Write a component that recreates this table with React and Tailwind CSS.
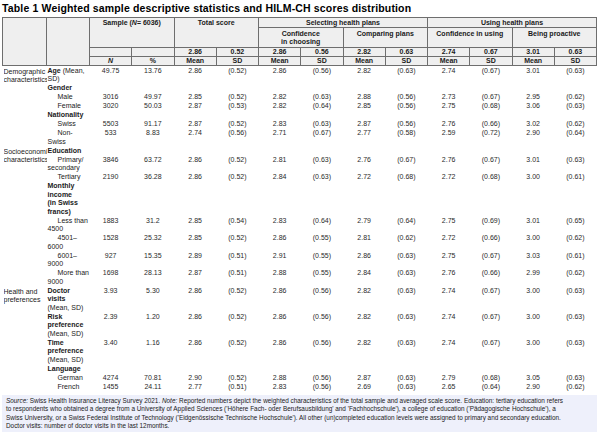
import React from 'react';

const rows = [
  { label: <><b>Age</b> (Mean,<br />SD)</>, v: ['49.75', '13.76', '2.86', '(0.52)', '2.86', '(0.56)', '2.82', '(0.63)', '2.74', '(0.67)', '3.01', '(0.63)'], cat: ['Demographic', 'characteristics'], span: 7 },
  { label: <b>Gender</b>, v: [] },
  { label: 'Male', indent: true, v: ['3016', '49.97', '2.85', '(0.52)', '2.82', '(0.63)', '2.88', '(0.56)', '2.73', '(0.67)', '2.95', '(0.62)'] },
  { label: 'Female', indent: true, v: ['3020', '50.03', '2.87', '(0.53)', '2.82', '(0.64)', '2.85', '(0.56)', '2.75', '(0.68)', '3.06', '(0.63)'] },
  { label: <b>Nationality</b>, v: [] },
  { label: 'Swiss', indent: true, v: ['5503', '91.17', '2.87', '(0.52)', '2.83', '(0.63)', '2.87', '(0.56)', '2.76', '(0.66)', '3.02', '(0.62)'] },
  { label: <>Non-<br />Swiss</>, indent: true, v: ['533', '8.83', '2.74', '(0.56)', '2.71', '(0.67)', '2.77', '(0.58)', '2.59', '(0.72)', '2.90', '(0.64)'] },
  { label: <b>Education</b>, v: [], cat: ['Socioeconomic', 'characteristics'], span: 8 },
  { label: <>Primary/<br />secondary</>, indent: true, v: ['3846', '63.72', '2.86', '(0.52)', '2.81', '(0.63)', '2.76', '(0.67)', '2.76', '(0.67)', '3.01', '(0.63)'] },
  { label: 'Tertiary', indent: true, v: ['2190', '36.28', '2.86', '(0.52)', '2.84', '(0.63)', '2.72', '(0.68)', '2.72', '(0.68)', '3.00', '(0.61)'] },
  { label: <b>Monthly<br />income<br />(in Swiss<br />francs)</b>, v: [] },
  { label: <>Less than<br />4500</>, indent: true, v: ['1883', '31.2', '2.85', '(0.54)', '2.83', '(0.64)', '2.79', '(0.64)', '2.75', '(0.69)', '3.01', '(0.65)'] },
  { label: <>4501–<br />6000</>, indent: true, v: ['1528', '25.32', '2.85', '(0.52)', '2.86', '(0.55)', '2.81', '(0.62)', '2.72', '(0.66)', '3.00', '(0.62)'] },
  { label: <>6001–<br />9000</>, indent: true, v: ['927', '15.35', '2.89', '(0.51)', '2.91', '(0.55)', '2.86', '(0.63)', '2.75', '(0.67)', '3.03', '(0.61)'] },
  { label: <>More than<br />9000</>, indent: true, v: ['1698', '28.13', '2.87', '(0.51)', '2.88', '(0.55)', '2.84', '(0.63)', '2.76', '(0.66)', '2.99', '(0.62)'] },
  { label: <><b>Doctor<br />visits</b><br />(Mean, SD)</>, v: ['3.93', '5.30', '2.86', '(0.52)', '2.86', '(0.56)', '2.82', '(0.63)', '2.74', '(0.67)', '3.00', '(0.63)'], cat: ['Health and', 'preferences'], span: 6 },
  { label: <><b>Risk<br />preference</b><br />(Mean, SD)</>, v: ['2.39', '1.20', '2.86', '(0.52)', '2.86', '(0.56)', '2.82', '(0.63)', '2.74', '(0.67)', '3.00', '(0.63)'] },
  { label: <><b>Time<br />preference</b><br />(Mean, SD)</>, v: ['3.40', '1.16', '2.86', '(0.52)', '2.86', '(0.56)', '2.82', '(0.63)', '2.74', '(0.67)', '3.00', '(0.63)'] },
  { label: <b>Language</b>, v: [] },
  { label: 'German', indent: true, v: ['4274', '70.81', '2.90', '(0.52)', '2.88', '(0.56)', '2.87', '(0.63)', '2.79', '(0.68)', '3.05', '(0.63)'] },
  { label: 'French', indent: true, v: ['1455', '24.11', '2.77', '(0.51)', '2.83', '(0.56)', '2.69', '(0.63)', '2.65', '(0.64)', '2.90', '(0.62)'] },
];

const th = 'border border-[#6e6e6e] bg-[#efefef] font-bold text-center align-top p-0 leading-[8px]';

export default function App() {
  return (
    <div className="w-[600px] h-[436px] bg-white text-[#1a1a1a] overflow-hidden" style={{ fontFamily: '"Liberation Sans", Arial, sans-serif' }}>
      <div className="pl-[2px] pt-[1px] h-[17px] text-[10.5px] leading-[14px] font-bold tracking-[0.15px] text-black">
        Table 1 Weighted sample descriptive statistics and HILM-CH scores distribution
      </div>
      <table className="ml-[2px] w-[595px] table-fixed border-collapse text-[7px] leading-[8.5px]">
        <colgroup>
          <col className="w-[44px]" />
          <col className="w-[43px]" />
          {Array.from({ length: 12 }).map((_, i) => <col key={i} />)}
        </colgroup>
        <thead>
          <tr className="h-[9px]">
            <th rowSpan={4} className={th}></th>
            <th rowSpan={4} className={th}></th>
            <th colSpan={2} rowSpan={2} className={th + ' pt-[1px]'}>Sample (<i>N</i>= 6036)</th>
            <th colSpan={2} rowSpan={2} className={th + ' pt-[1px]'}>Total score</th>
            <th colSpan={4} className={th + ' pt-[1px]'}>Selecting health plans</th>
            <th colSpan={4} className={th + ' pt-[1px]'}>Using health plans</th>
          </tr>
          <tr className="h-[20px]">
            <th colSpan={2} className={th + ' pt-[2px]'}>Confidence<br />in choosing</th>
            <th colSpan={2} className={th + ' pt-[2px]'}>Comparing plans</th>
            <th colSpan={2} className={th + ' pt-[2px]'}>Confidence in using</th>
            <th colSpan={2} className={th + ' pt-[2px]'}>Being proactive</th>
          </tr>
          <tr className="h-[8px]">
            {['', '', '2.86', '0.52', '2.86', '0.56', '2.82', '0.63', '2.74', '0.67', '3.01', '0.63'].map((t, i) => (
              <th key={i} className={th}>{t}</th>
            ))}
          </tr>
          <tr className="h-[8px]">
            <th className={th}><i>N</i></th>
            <th className={th}>%</th>
            {['Mean', 'SD', 'Mean', 'SD', 'Mean', 'SD', 'Mean', 'SD', 'Mean', 'SD'].map((t, i) => (
              <th key={i} className={th}>{t}</th>
            ))}
          </tr>
        </thead>
        <tbody>
          {rows.map((r, i) => (
            <tr key={i}>
              {r.cat && (
                <td rowSpan={r.span} className="align-top p-0 pl-[1px] pt-[1.5px]">
                  <div className="overflow-hidden whitespace-nowrap">
                    {r.cat[0]}<br />{r.cat[1]}
                  </div>
                </td>
              )}
              <td className={'align-top p-0 pl-[1px] pt-[0.5px] whitespace-nowrap ' + (r.indent ? 'indent-[10px]' : '')}>
                {r.label}
              </td>
              {Array.from({ length: 12 }).map((_, j) => (
                <td key={j} className="align-top text-center p-0 pt-[0.5px] text-[#2a2a2a]">{r.v[j] || ''}</td>
              ))}
            </tr>
          ))}
        </tbody>
      </table>
      <div className="mt-[4px] ml-[2px] w-[595px] bg-[#eef0fb] px-[4px] pt-[2px] pb-[1px] text-[6.4px] leading-[8.4px] text-[#1a1a1a] whitespace-nowrap">
        <i>Source:</i> Swiss Health Insurance Literacy Survey 2021. <i>Note:</i> Reported numbers depict the weighted characteristics of the total sample and averaged scale score. Education: tertiary education refers<br />
        to respondents who obtained a degree from a University of Applied Sciences ('Höhere Fach- oder Berufsausbildung' and 'Fachhochschule'), a college of education ('Pädagogische Hochschule'), a<br />
        Swiss University, or a Swiss Federal Institute of Technology ('Eidgenössische Technische Hochschule'). All other (un)completed education levels were assigned to primary and secondary education.<br />
        Doctor visits: number of doctor visits in the last 12months.
      </div>
    </div>
  );
}
